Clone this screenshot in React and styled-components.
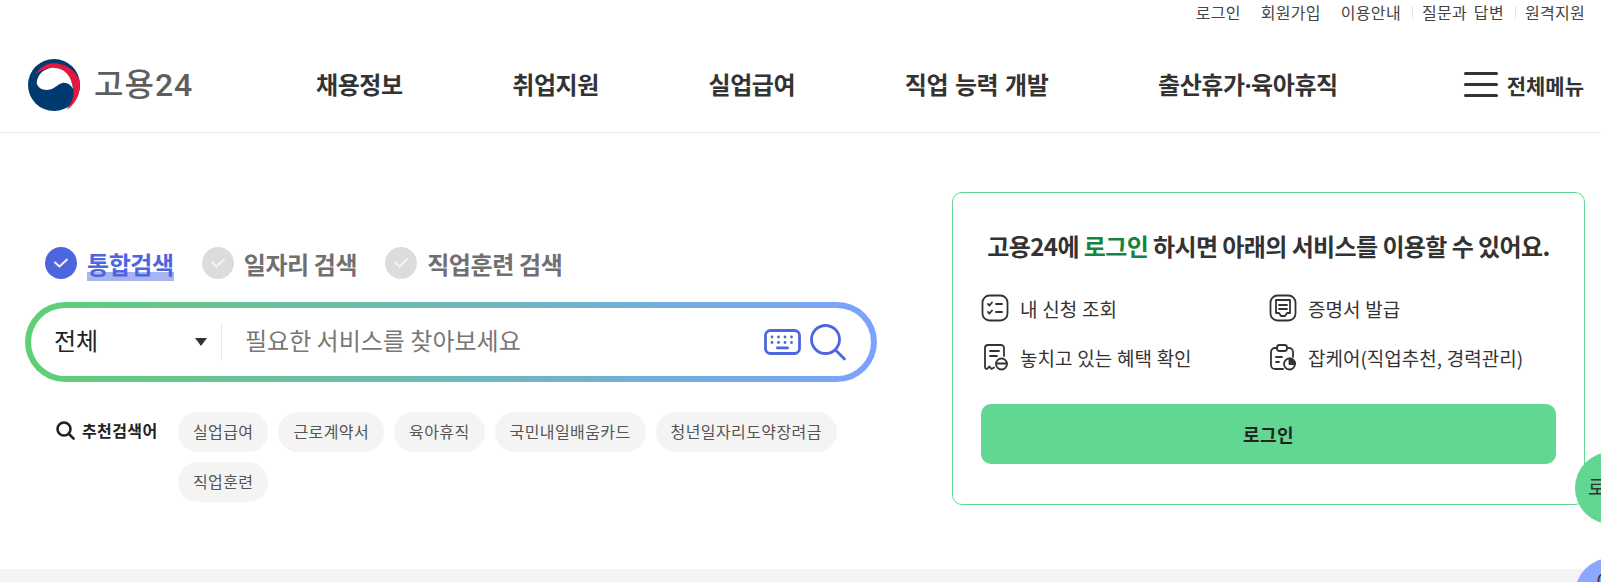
import React from 'react';
import styled, { createGlobalStyle } from 'styled-components';

const Global = createGlobalStyle`
  html, body {
    margin: 0;
    padding: 0;
    background: #fff;
    font-family: "Noto Sans CJK KR", "Noto Sans", sans-serif;
    overflow: hidden;
  }
  * { box-sizing: border-box; }
`;

const Page = styled.div`
  position: relative;
  width: 1601px;
  height: 582px;
  overflow: hidden;
`;

const UtilBar = styled.ul`
  display: flex;
  justify-content: flex-end;
  align-items: center;
  height: 24px;
  margin: 0;
  padding: 0 16px 0 0;
  list-style: none;
`;

const UtilItem = styled.li`
  font-size: 16px;
  line-height: 22px;
  letter-spacing: 0.3px;
  word-spacing: 3px;
  color: #444;
  margin-left: ${p => (p.$sep ? '11px' : '20px')};
  padding-left: ${p => (p.$sep ? '10px' : '0')};
  background: ${p => (p.$sep ? 'linear-gradient(#e4e4e4, #e4e4e4) left 5px / 1px 13px no-repeat' : 'none')};
`;

const Header = styled.header`
  display: flex;
  align-items: center;
  height: 109px;
  padding: 13px 17px 0 27px;
  border-bottom: 1px solid #e8e8e8;
`;

const Logo = styled.a`
  display: flex;
  align-items: center;
  gap: 13px;
  width: 289px;
`;

const LogoText = styled.span`
  font-family: Roboto, "Noto Sans CJK KR", sans-serif;
  font-size: 32px;
  line-height: 40px;
  font-weight: 500;
  color: #5e5e5e;
  letter-spacing: 1px;
`;

const Nav = styled.nav`
  display: flex;
  gap: 109.5px;
  flex: 1;
`;

const NavLink = styled.a`
  font-family: "Noto Sans", "Noto Sans CJK KR", sans-serif;
  font-size: 24px;
  line-height: 32px;
  font-weight: 700;
  letter-spacing: -0.4px;
  word-spacing: 1px;
  color: #333;
  white-space: nowrap;
`;

const MenuButton = styled.div`
  display: flex;
  align-items: center;
  gap: 9px;
  font-size: 21px;
  font-weight: 700;
  color: #333;
`;

const Burger = styled.span`
  display: flex;
  flex-direction: column;
  gap: 7.5px;
  width: 34px;
  i {
    display: block;
    height: 3.5px;
    border-radius: 2px;
    background: #333;
  }
`;

const Main = styled.main`
  display: flex;
  height: 436px;
  padding: 59px 16px 0 25px;
  justify-content: space-between;
`;

const SearchCol = styled.section`
  width: 852px;
  padding-top: 55px;
`;

const Tabs = styled.div`
  display: flex;
  align-items: flex-start;
  height: 34px;
  padding-left: 20px;
  gap: 28px;
`;

const Tab = styled.div`
  display: flex;
  align-items: flex-start;
  gap: 10px;
`;

const Check = styled.span`
  display: flex;
  align-items: center;
  justify-content: center;
  width: 32px;
  height: 32px;
  border-radius: 50%;
  background: ${p => (p.$on ? '#4d65de' : '#dcdcdc')};
`;

const TabLabel = styled.span`
  margin-top: 4px;
  padding-bottom: 4px;
  font-size: 24px;
  line-height: 26px;
  letter-spacing: -0.4px;
  font-weight: 700;
  color: ${p => (p.$on ? '#4d65de' : '#707070')};
  ${p => p.$on && 'background: linear-gradient(#a8b4ef, #a8b4ef) left bottom / 100% 9px no-repeat;'}
`;

const SearchBox = styled.div`
  display: flex;
  align-items: center;
  height: 80px;
  margin-top: 21px;
  padding: 0 24px 0 23px;
  border: 6px solid transparent;
  border-radius: 40px;
  background:
    linear-gradient(#fff, #fff) padding-box,
    linear-gradient(90deg, #5fcf73 0%, #7ba2ff 100%) border-box;
`;

const Select = styled.div`
  display: flex;
  align-items: center;
  justify-content: space-between;
  width: 168px;
  height: 38px;
  padding-right: 14px;
  border-right: 1px solid #e8e8e8;
  font-size: 24px;
  color: #222;
`;

const SelectValue = styled.span`
  margin-top: -6px;
`;

const Arrow = styled.i`
  width: 0;
  height: 0;
  border-left: 6.5px solid transparent;
  border-right: 6.5px solid transparent;
  border-top: 8px solid #333;
`;

const Placeholder = styled.div`
  flex: 1;
  padding: 0 0 5px 23px;
  font-size: 24px;
  color: #777;
`;

const IconRow = styled.div`
  display: flex;
  align-items: center;
  gap: 9px;
`;

const Recommend = styled.div`
  display: flex;
  align-items: flex-start;
  margin-top: 30px;
  padding-left: 31px;
`;

const RecommendLabel = styled.div`
  display: flex;
  align-items: center;
  gap: 7px;
  width: 122px;
  height: 36px;
  font-size: 16px;
  font-weight: 700;
  letter-spacing: 0.4px;
  color: #222;
  white-space: nowrap;
`;

const Chips = styled.div`
  display: flex;
  flex-wrap: wrap;
  gap: 10px;
  width: 680px;
`;

const Chip = styled.a`
  height: 40px;
  padding: 0 15px;
  border-radius: 20px;
  background: #f4f4f4;
  font-size: 16px;
  line-height: 38px;
  letter-spacing: 0.4px;
  color: #555;
`;

const Card = styled.aside`
  width: 633px;
  height: 313px;
  padding: 0 28px;
  border: 1px solid #62d693;
  border-radius: 10px;
`;

const CardTitle = styled.h2`
  margin: 34px 0 0;
  text-align: center;
  font-size: 24px;
  line-height: 38px;
  font-weight: 700;
  color: #333;
  white-space: nowrap;
  letter-spacing: -0.6px;
  em {
    font-style: normal;
    color: #14843f;
  }
`;

const Services = styled.ul`
  display: grid;
  grid-template-columns: 288px 1fr;
  row-gap: 21px;
  margin: 29px 0 0;
  padding: 0;
  list-style: none;
`;

const Service = styled.li`
  display: flex;
  align-items: center;
  gap: 11px;
  height: 28px;
  font-size: 19px;
  word-spacing: 0.5px;
  color: #333;
  white-space: nowrap;
`;

const LoginButton = styled.button`
  display: block;
  width: 100%;
  height: 60px;
  margin-top: 33px;
  padding-bottom: 2px;
  border: 0;
  border-radius: 10px;
  background: #62d693;
  font: 700 18px "Noto Sans CJK KR", sans-serif;
  letter-spacing: 0.4px;
  color: #222;
`;

const Band = styled.div`
  height: 14px;
  background: #f4f4f4;
`;

const Floating = styled.div`
  position: absolute;
  left: 1575px;
  top: ${p => p.$top}px;
  width: 72px;
  height: 72px;
  padding: ${p => p.$pad};
  border-radius: 50%;
  background: ${p => p.$bg};
  font-size: 20px;
  line-height: 30px;
  color: #333;
  white-space: nowrap;
`;

const TaegeukLogo = () => (
  <svg width="54" height="52" viewBox="0 0 54 52">
    <circle cx="27" cy="26" r="26" fill="#003a70" />
    <path d="M8 16C12 9 19 4.300 26.500 4.300 41 4.300 53 15 53 26c0 11-6 20-13.300 25 3.300-5 7.300-11 6.800-19C46 19 37 8.700 26.500 8.700 19 8.700 12 12 8 16z" fill="#e4173e" />
    <path d="M9.700 24.300C10 15 18 8.700 26.500 8.700 37 8.700 45 17 46 30c-2-4-7-7.500-11.300-5.700-3.700 1.200-5.700 3.700-8.400 5C21 32 12 32 9.700 24.300z" fill="#fff" />
  </svg>
);

const CheckMark = ({ color }) => (
  <svg width="16" height="10" viewBox="0 0 16 10" fill="none">
    <path d="M2 4.500l4.500 4 7.500-7" stroke={color} strokeWidth="2" strokeLinecap="round" strokeLinejoin="round" />
  </svg>
);

const KeyboardIcon = () => (
  <svg width="37" height="26" viewBox="0 0 37 26" fill="#4d65de">
    <rect x="1.500" y="1.500" width="34" height="23" rx="5" fill="none" stroke="#4d65de" strokeWidth="2.800" />
    {[8, 14.5, 21, 27.5].map(x => <circle key={x} cx={x} cy="8" r="1.400" />)}
    {[8, 14.5, 21, 27.5].map(x => <circle key={`b${x}`} cx={x} cy="13.500" r="1.400" />)}
    <rect x="12" y="17.500" width="13" height="2.800" rx="1.400" />
  </svg>
);

const SearchIcon = () => (
  <svg width="37" height="37" viewBox="0 0 37 37" fill="none" stroke="#4d65de" strokeWidth="2.800" strokeLinecap="round">
    <circle cx="15.500" cy="15.500" r="14" />
    <path d="M25.500 26l9 9" />
  </svg>
);

const SmallSearch = () => (
  <svg width="19" height="19" viewBox="0 0 19 19" fill="none" stroke="#222" strokeWidth="2.600" strokeLinecap="round">
    <circle cx="8" cy="8" r="6.500" />
    <path d="M13 13l4.600 4.600" />
  </svg>
);

const ServiceIcon = ({ children }) => (
  <svg width="28" height="28" viewBox="0 0 28 28" fill="none" stroke="#333" strokeWidth="1.800" strokeLinecap="round" strokeLinejoin="round">
    {children}
  </svg>
);

const ListIcon = () => (
  <ServiceIcon>
    <rect x="1.500" y="1.500" width="25" height="25" rx="7" />
    <path d="M7 10l1.500 1.500L11 8.500M7 18l1.500 1.500L11 16.500M15 10h6M15 18h6" />
  </ServiceIcon>
);

const CertIcon = () => (
  <ServiceIcon>
    <rect x="1.500" y="1.500" width="25" height="25" rx="7" />
    <path d="M7 6h14v13h-3l-2 3h-4l-2-3H7zM10 11h8M10 15h8" />
  </ServiceIcon>
);

const BenefitIcon = () => (
  <ServiceIcon>
    <path d="M23 13V5a3 3 0 0 0-3-3H7a3 3 0 0 0-3 3v19c0 2 2 2.500 3 1l1.500-1.500 2 2.500 2.500-1.500" />
    <path d="M9 8h9M9 13h7" />
    <circle cx="20.500" cy="21" r="5.500" />
    <path d="M15.500 20.500h10" strokeWidth="2.200" />
  </ServiceIcon>
);

const JobIcon = () => (
  <ServiceIcon>
    <path d="M8 5H6a4 4 0 0 0-4 4v13a4 4 0 0 0 4 4h8M18 5h2a4 4 0 0 1 4 4v5" />
    <rect x="8" y="2" width="10" height="6" rx="2.500" />
    <path d="M7 14h6M7 19h3" />
    <circle cx="20.500" cy="21" r="5.500" />
    <path d="M20.500 21v-5.500a5.500 5.500 0 0 1 5.500 5.500z" fill="#333" />
  </ServiceIcon>
);

const navItems = ['채용정보', '취업지원', '실업급여', '직업 능력 개발', '출산휴가·육아휴직'];
const chips = ['실업급여', '근로계약서', '육아휴직', '국민내일배움카드', '청년일자리도약장려금', '직업훈련'];

export default function App() {
  return (
    <Page>
      <Global />
      <UtilBar>
        <UtilItem>로그인</UtilItem>
        <UtilItem>회원가입</UtilItem>
        <UtilItem>이용안내</UtilItem>
        <UtilItem $sep>질문과 답변</UtilItem>
        <UtilItem $sep>원격지원</UtilItem>
      </UtilBar>
      <Header>
        <Logo>
          <TaegeukLogo />
          <LogoText>고용24</LogoText>
        </Logo>
        <Nav>
          {navItems.map(item => <NavLink key={item}>{item}</NavLink>)}
        </Nav>
        <MenuButton>
          <Burger><i /><i /><i /></Burger>
          전체메뉴
        </MenuButton>
      </Header>
      <Main>
        <SearchCol>
          <Tabs>
            <Tab>
              <Check $on><CheckMark color="#f0f2ff" /></Check>
              <TabLabel $on>통합검색</TabLabel>
            </Tab>
            <Tab>
              <Check><CheckMark color="#f4f4f4" /></Check>
              <TabLabel>일자리 검색</TabLabel>
            </Tab>
            <Tab>
              <Check><CheckMark color="#f4f4f4" /></Check>
              <TabLabel>직업훈련 검색</TabLabel>
            </Tab>
          </Tabs>
          <SearchBox>
            <Select><SelectValue>전체</SelectValue><Arrow /></Select>
            <Placeholder>필요한 서비스를 찾아보세요</Placeholder>
            <IconRow>
              <KeyboardIcon />
              <SearchIcon />
            </IconRow>
          </SearchBox>
          <Recommend>
            <RecommendLabel><SmallSearch />추천검색어</RecommendLabel>
            <Chips>
              {chips.map(chip => <Chip key={chip}>{chip}</Chip>)}
            </Chips>
          </Recommend>
        </SearchCol>
        <Card>
          <CardTitle>고용24에 <em>로그인</em> 하시면 아래의 서비스를 이용할 수 있어요.</CardTitle>
          <Services>
            <Service><ListIcon />내 신청 조회</Service>
            <Service><CertIcon />증명서 발급</Service>
            <Service><BenefitIcon />놓치고 있는 혜택 확인</Service>
            <Service><JobIcon />잡케어(직업추천, 경력관리)</Service>
          </Services>
          <LoginButton>로그인</LoginButton>
        </Card>
      </Main>
      <Band />
      <Floating $top={452} $bg="#62d693" $pad="20px 0 0 13px">로그인</Floating>
      <Floating $top={558} $bg="#8aa8ff" $pad="9px 0 0 21px">이용안내</Floating>
    </Page>
  );
}
